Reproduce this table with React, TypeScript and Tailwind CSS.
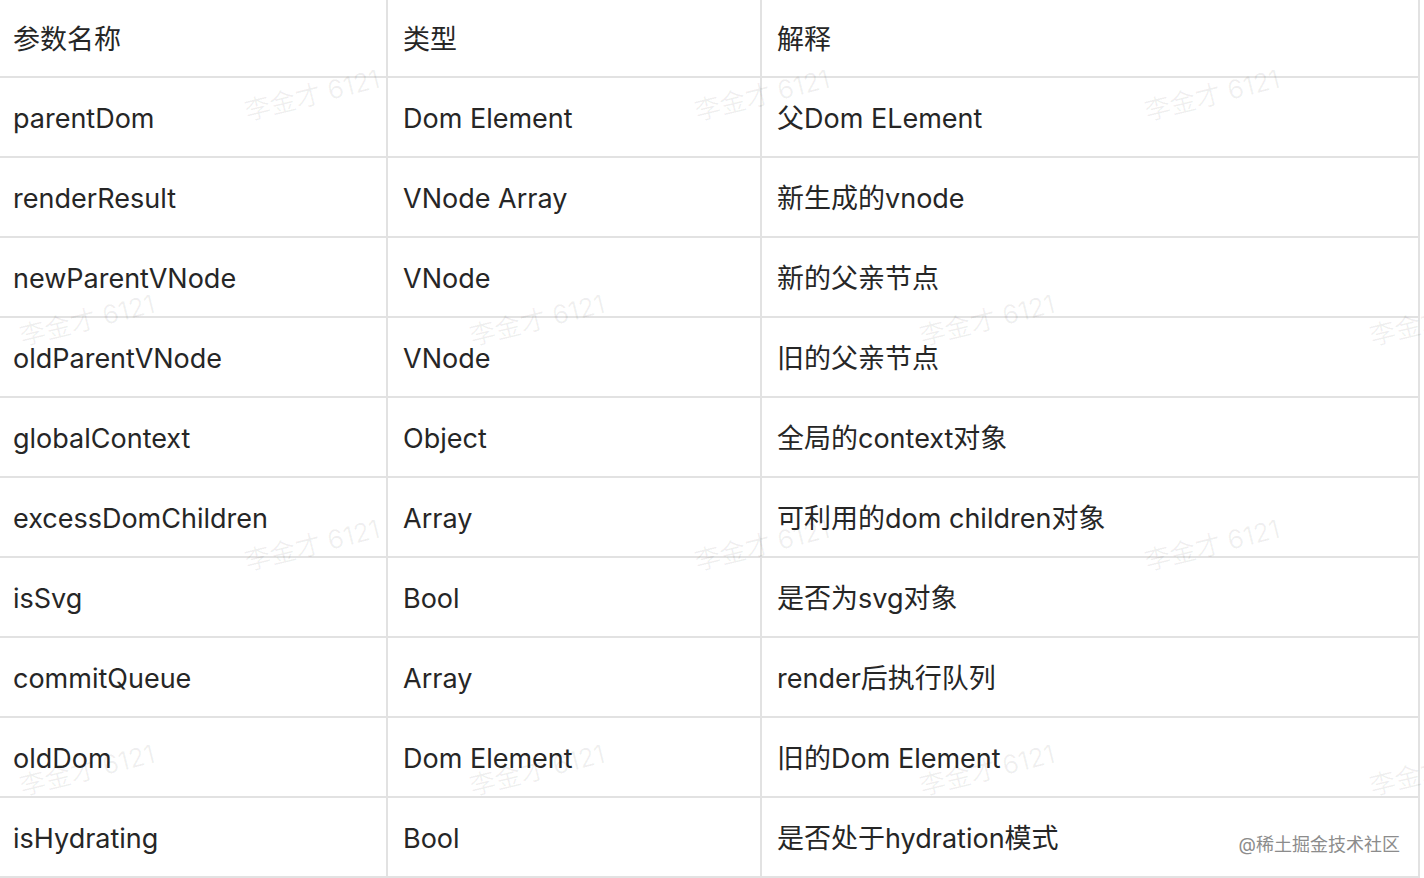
import React from "react";

const rows: [string, string, string][] = [
  ["参数名称", "类型", "解释"],
  ["parentDom", "Dom Element", "父Dom ELement"],
  ["renderResult", "VNode Array", "新生成的vnode"],
  ["newParentVNode", "VNode", "新的父亲节点"],
  ["oldParentVNode", "VNode", "旧的父亲节点"],
  ["globalContext", "Object", "全局的context对象"],
  ["excessDomChildren", "Array", "可利用的dom children对象"],
  ["isSvg", "Bool", "是否为svg对象"],
  ["commitQueue", "Array", "render后执行队列"],
  ["oldDom", "Dom Element", "旧的Dom Element"],
  ["isHydrating", "Bool", "是否处于hydration模式"],
];

const marks: [number, number][] = [
  [245, 70], [695, 70], [1145, 70],
  [20, 295], [470, 295], [920, 295], [1370, 295],
  [245, 520], [695, 520], [1145, 520],
  [20, 745], [470, 745], [920, 745], [1370, 745],
];

export default function App() {
  return (
    <div
      className="relative w-[1424px] h-[878px] overflow-hidden bg-white text-[#262626]"
      style={{ fontFamily: 'Inter, "Noto Sans CJK SC", sans-serif' }}
    >
      <div className="w-[1420px]">
        {rows.map((r, i) => (
          <div
            key={i}
            className={`flex border-b-2 border-[#e2e2e2] ${i === 0 ? "h-[78px]" : "h-[80px]"}`}
          >
            <div className="w-[388px] flex items-center pl-[13px] pt-[4px] border-r-2 border-[#e2e2e2] text-[27px]">
              {r[0]}
            </div>
            <div className="w-[374px] flex items-center pl-[15px] pt-[4px] border-r-2 border-[#e2e2e2] text-[27px]">
              {r[1]}
            </div>
            <div className="w-[658px] flex items-center pl-[15px] pt-[4px] border-r-2 border-[#e2e2e2] text-[27px]">
              {r[2]}
            </div>
          </div>
        ))}
      </div>
      {marks.map(([x, y], i) => (
        <div
          key={i}
          className="pointer-events-none absolute whitespace-nowrap text-[26px] text-[rgba(0,0,0,0.06)] rotate-[-14deg] origin-left"
          style={{ left: x, top: y + 22 }}
        >
          李金才 6121
        </div>
      ))}
      <div
        className="pointer-events-none absolute right-[24px] top-[831px] text-[18px] text-[#8c8c8c] whitespace-nowrap"
        style={{ textShadow: "0 0 2px #fff" }}
      >
        @稀土掘金技术社区
      </div>
    </div>
  );
}
